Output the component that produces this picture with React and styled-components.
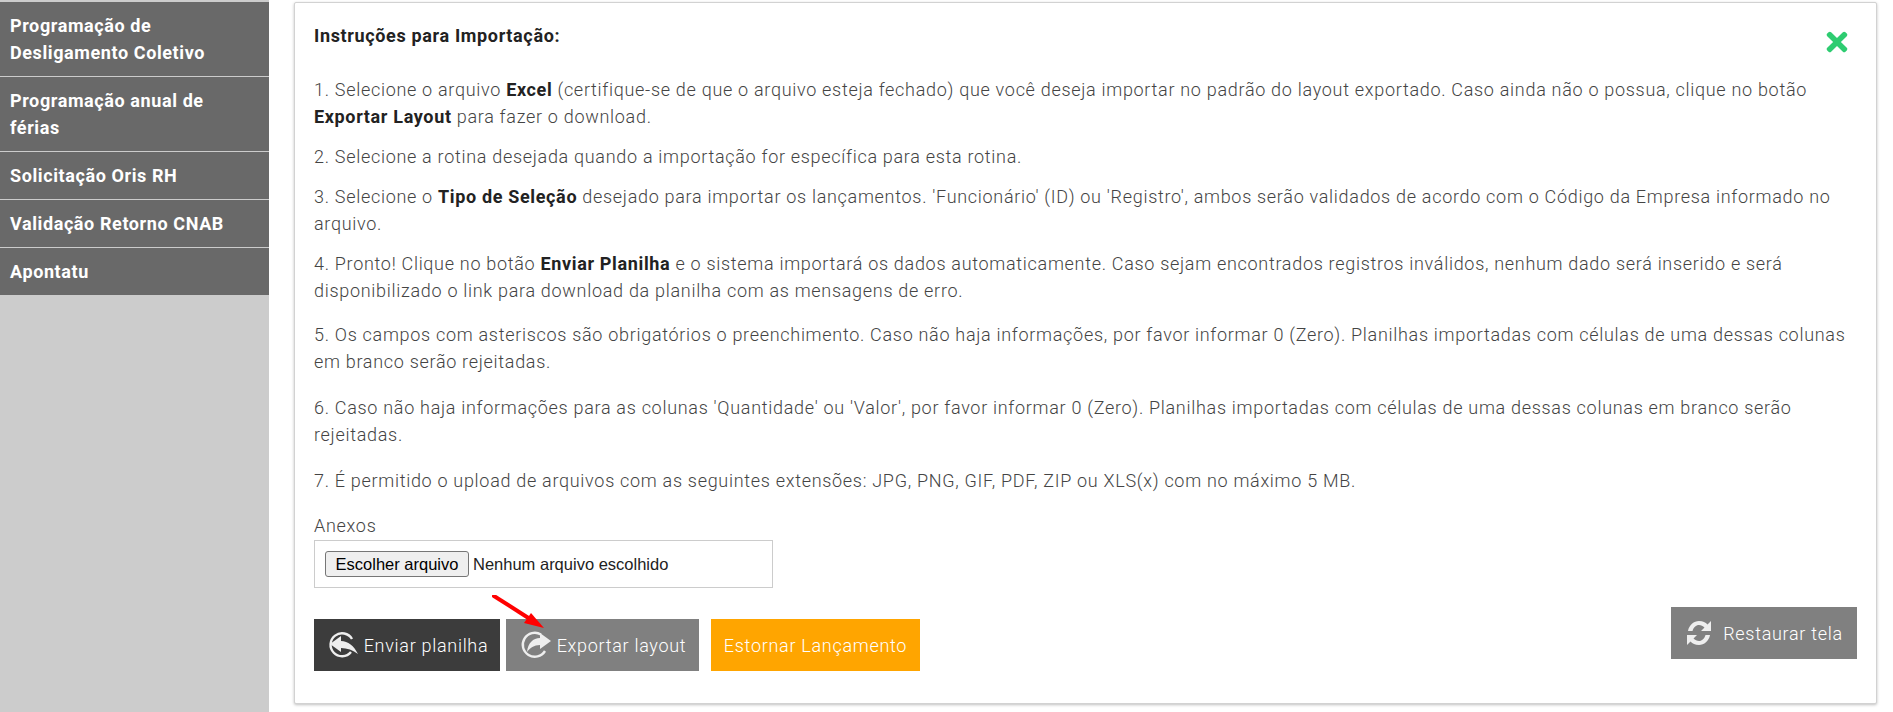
import React from 'react';
import styled, { createGlobalStyle } from 'styled-components';
import { FaTimes } from 'react-icons/fa';

const GlobalStyle = createGlobalStyle`
  html, body { margin: 0; padding: 0; background: #fff; }
  body { font-family: Roboto, "Liberation Sans", sans-serif; overflow: hidden; }
  * { box-sizing: border-box; }
`;

const menuItems = [
  ['Programação de', 'Desligamento Coletivo'],
  ['Programação anual de', 'férias'],
  ['Solicitação Oris RH'],
  ['Validação Retorno CNAB'],
  ['Apontatu'],
];

function ReplyIcon() {
  return (
    <svg width="34" height="30" viewBox="0 0 34 30" fill="none">
      <path d="M25 22a11.500 11.500 0 1 1 1 -13" stroke="#eee" strokeWidth="2.4" />
      <path d="M4 14 L15 6 V11 C22 11 28 16 32 24 C27 20 21 18 15 18 V22 Z" fill="#eee" />
    </svg>
  );
}

function ShareIcon() {
  return (
    <svg width="34" height="30" viewBox="0 0 34 30" fill="none">
      <path d="M22 4.500 A12 12 0 1 0 26 21" stroke="#eee" strokeWidth="2.4" />
      <path d="M32 11 L21 3 V8 C14 8 9 13 8 22 C11 18 15 15 21 15 V19 Z" fill="#eee" />
    </svg>
  );
}

function SyncIcon() {
  return (
    <svg width="28" height="28" viewBox="0 0 28 28" fill="#eee">
      <path d="M3 12 C4 6 9 2 14 2 C18 2 20.500 3.500 22.500 5.500 L26 2 V12 H16 L19.500 8.500 C18 7 16 6 14 6 C11 6 8.500 8.500 7.500 12 Z" />
      <path d="M25 16 C24 22 19 26 14 26 C10 26 7.500 24.500 5.500 22.500 L2 26 V16 H12 L8.500 19.500 C10 21 12 22 14 22 C17 22 19.500 19.500 20.500 16 Z" />
    </svg>
  );
}

export default function App() {
  return (
    <Page>
      <GlobalStyle />
      <Sidebar>
        {menuItems.map((lines) => (
          <MenuItem key={lines[0]}>
            {lines.map((line) => (
              <div key={line}>{line}</div>
            ))}
          </MenuItem>
        ))}
      </Sidebar>
      <Main>
        <Card>
          <CloseIcon><FaTimes /></CloseIcon>
          <Title>Instruções para Importação:</Title>
          <Paragraph $mb={13}>
            1. Selecione o arquivo <b>Excel</b> (certifique-se de que o arquivo esteja fechado) que você deseja importar no padrão do layout exportado. Caso ainda não o possua, clique no botão<br />
            <b>Exportar Layout</b> para fazer o download.
          </Paragraph>
          <Paragraph $mb={13}>2. Selecione a rotina desejada quando a importação for específica para esta rotina.</Paragraph>
          <Paragraph $mb={13}>
            3. Selecione o <b>Tipo de Seleção</b> desejado para importar os lançamentos. 'Funcionário' (ID) ou 'Registro', ambos serão validados de acordo com o Código da Empresa informado no<br />
            arquivo.
          </Paragraph>
          <Paragraph $mb={17}>
            4. Pronto! Clique no botão <b>Enviar Planilha</b> e o sistema importará os dados automaticamente. Caso sejam encontrados registros inválidos, nenhum dado será inserido e será<br />
            disponibilizado o link para download da planilha com as mensagens de erro.
          </Paragraph>
          <Paragraph $mb={19}>
            5. Os campos com asteriscos são obrigatórios o preenchimento. Caso não haja informações, por favor informar 0 (Zero). Planilhas importadas com células de uma dessas colunas<br />
            em branco serão rejeitadas.
          </Paragraph>
          <Paragraph $mb={19}>
            6. Caso não haja informações para as colunas 'Quantidade' ou 'Valor', por favor informar 0 (Zero). Planilhas importadas com células de uma dessas colunas em branco serão<br />
            rejeitadas.
          </Paragraph>
          <Paragraph $mb={19}>7. É permitido o upload de arquivos com as seguintes extensões: JPG, PNG, GIF, PDF, ZIP ou XLS(x) com no máximo 5 MB.</Paragraph>
          <FieldLabel>Anexos</FieldLabel>
          <FileBox>
            <FileButton type="button">Escolher arquivo</FileButton>
            <span>Nenhum arquivo escolhido</span>
          </FileBox>
          <Actions>
            <ButtonGroup>
              <ActionButton $bg="#3c3c3c" $w={186}><ReplyIcon />Enviar planilha</ActionButton>
              <ActionButton $bg="#808080" $w={193}><ShareIcon />Exportar layout</ActionButton>
              <ActionButton $bg="#ffa500" $w={209} $ml={6}>Estornar Lançamento</ActionButton>
              <RedArrow width="56" height="36" viewBox="0 0 56 36">
                <path d="M2 1 L38 24" stroke="#f00" strokeWidth="4" strokeLinecap="round" />
                <path d="M52 33 L32 28 L39 18 Z" fill="#f00" />
              </RedArrow>
            </ButtonGroup>
            <ActionButton $bg="#808080" $w={186} $up $gap={10}><SyncIcon />Restaurar tela</ActionButton>
          </Actions>
        </Card>
      </Main>
    </Page>
  );
}

const Page = styled.div`
  display: flex;
  height: 712px;
  width: 1893px;
`;

const Sidebar = styled.nav`
  width: 269px;
  flex: none;
  background: #ccc;
  padding-top: 1px;
`;

const MenuItem = styled.div`
  background: #696969;
  border-top: 1px solid #ccc;
  color: #fff;
  font-size: 18px;
  font-weight: 700;
  line-height: 27px;
  padding: 10px 10px;
  letter-spacing: 0.6px;
`;

const Main = styled.main`
  flex: 1;
  padding: 2px 16px 8px 25px;
`;

const Card = styled.section`
  position: relative;
  height: 702px;
  background: #fff;
  border: 1px solid #d2d2d2;
  border-radius: 2px;
  box-shadow: 0 1px 3px rgba(0, 0, 0, 0.25);
  padding: 19px 19px 0;
  color: #444;
  font-size: 18px;
  font-weight: 300;
  letter-spacing: 0.7px;
`;

const CloseIcon = styled.div`
  position: absolute;
  top: 24px;
  right: 24px;
  color: #2ecc71;
  font-size: 30px;
  line-height: 0;
`;

const Title = styled.h4`
  margin: 0 0 27px;
  font-size: 18px;
  font-weight: 700;
  line-height: 27px;
  color: #222;
  letter-spacing: 0.65px;
`;

const Paragraph = styled.p`
  margin: 0 0 ${(p) => p.$mb}px;
  line-height: 27px;
  white-space: nowrap;
  b { font-weight: 700; color: #222; letter-spacing: 0.65px; }
`;

const FieldLabel = styled.div`
  font-size: 18px;
  line-height: 24px;
  margin-top: 20px;
  margin-bottom: 2px;
`;

const FileBox = styled.div`
  display: flex;
  align-items: center;
  gap: 4px;
  width: 459px;
  height: 48px;
  border: 1px solid #ccc;
  padding: 0 10px;
  font-family: "Liberation Sans", Arial, sans-serif;
  font-size: 16.5px;
  font-weight: 400;
  letter-spacing: 0;
  color: #222;
`;

const FileButton = styled.button`
  height: 26px;
  width: 144px;
  padding: 0;
  background: #efefef;
  border: 1px solid #767676;
  border-radius: 3px;
  font-family: "Liberation Sans", Arial, sans-serif;
  font-size: 16.5px;
  color: #000;
`;

const Actions = styled.div`
  display: flex;
  justify-content: space-between;
  align-items: flex-start;
  margin-top: 31px;
`;

const ButtonGroup = styled.div`
  position: relative;
  display: flex;
  gap: 6px;
`;

const ActionButton = styled.button`
  display: flex;
  align-items: center;
  justify-content: center;
  gap: ${(p) => p.$gap || 4}px;
  width: ${(p) => p.$w}px;
  height: 52px;
  margin-left: ${(p) => p.$ml || 0}px;
  margin-top: ${(p) => (p.$up ? -12 : 0)}px;
  background: ${(p) => p.$bg};
  border: 0;
  padding: 0;
  color: #fff;
  font-family: Roboto, sans-serif;
  font-size: 18px;
  font-weight: 300;
  letter-spacing: 0.7px;
  white-space: nowrap;
`;

const RedArrow = styled.svg`
  position: absolute;
  left: 178px;
  top: -24px;
`;
